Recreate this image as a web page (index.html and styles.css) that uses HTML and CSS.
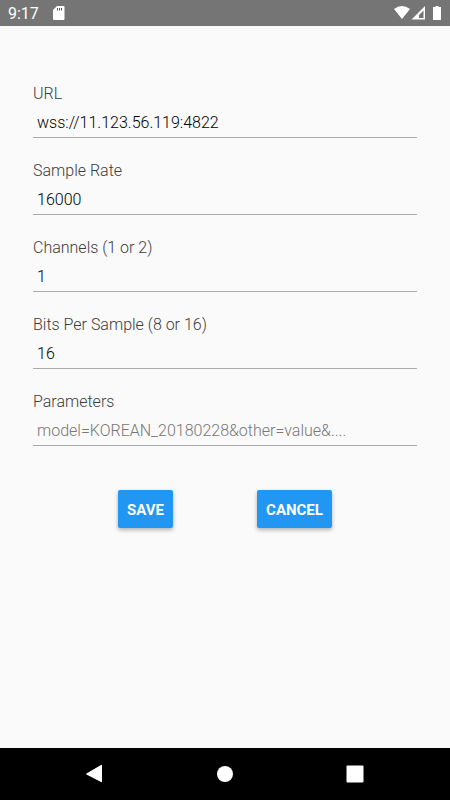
FILE: index.html
```html
<!DOCTYPE html>
<html lang="en">
<head>
<meta charset="utf-8">
<meta name="viewport" content="width=device-width, initial-scale=1">
<title>Settings</title>
<link rel="stylesheet" href="styles.css">
</head>
<body>
<header class="status">
  <span class="time">9:17</span>
  <svg class="sd" width="12" height="14" viewBox="0 0 12 14" aria-hidden="true"><path d="M4 0h6.500a1 1 0 0 1 1 1v12a1 1 0 0 1-1 1H1a1 1 0 0 1-1-1V4z" fill="#fff"/><path d="M4 2h1v2.500H4zM6 2h1v2.500H6zM8 2h1v2.500H8z" fill="#555"/></svg>
  <svg class="signals" width="48" height="14" viewBox="0 0 48 14" aria-hidden="true"><path d="M0 3Q8-3 16 3L8 13z" fill="#fff"/><path fill-rule="evenodd" d="M31 0v13.500H17.500zM29.500 4.500 25 9v3h4.500z" fill="#fff"/><path d="M39 1h2.500V0h3v1H47v13h-8z" fill="#fff"/></svg>
</header>
<main>
  <form class="form">
    <div class="field"><label for="url">URL</label><input id="url" type="text" value="wss://11.123.56.119:4822"></div>
    <div class="field"><label for="rate">Sample Rate</label><input id="rate" type="text" value="16000"></div>
    <div class="field"><label for="channels">Channels (1 or 2)</label><input id="channels" type="text" value="1"></div>
    <div class="field"><label for="bits">Bits Per Sample (8 or 16)</label><input id="bits" type="text" value="16"></div>
    <div class="field"><label for="params">Parameters</label><input id="params" type="text" placeholder="model=KOREAN_20180228&amp;other=value&amp;...."></div>
    <div class="actions"><button type="button">SAVE</button><button type="button">CANCEL</button></div>
  </form>
</main>
<nav class="nav">
  <button type="button" aria-label="Back"><svg width="20" height="20" viewBox="0 0 20 20"><path d="M1.500 9.500 16 1q1-.5 1 .5v16q0 1-1 .5L1.500 10.500q-1-.5 0-1z" fill="#fff"/></svg></button>
  <button type="button" aria-label="Home"><svg width="18" height="18" viewBox="0 0 18 18"><circle cx="9" cy="9" r="8" fill="#fff"/></svg></button>
  <button type="button" aria-label="Overview"><svg width="18" height="18" viewBox="0 0 18 18"><rect x=".5" y=".5" width="17" height="17" rx="1" fill="#fff"/></svg></button>
</nav>
</body>
</html>
```
FILE: styles.css
```css
* { box-sizing: border-box; }
body {
  margin: 0;
  min-height: 100vh;
  display: flex;
  flex-direction: column;
  background: #fafafa;
  font-family: Roboto, sans-serif;
  font-size: 16px;
}
.status {
  height: 26px;
  padding: 0 8px;
  display: flex;
  align-items: center;
  background: #757575;
  color: #fff;
}
.time { line-height: 20px; padding-top: 1px; }
.sd { margin-left: 14px; }
.signals { margin-left: auto; }
main { flex: 1; padding: 58px 33px 0; }
.field { margin-bottom: 23px; }
.field label { display: block; line-height: 20px; font-weight: 300; color: #3c3c3c; }
.field input {
  display: block;
  width: 100%;
  height: 34px;
  padding: 4px 4px 0;
  border: 0;
  border-bottom: 1px solid #aaa;
  background: none;
  font: inherit;
  font-weight: 300;
  color: #000;
  outline: 0;
}
.field input::placeholder { color: #777; opacity: 1; }
.actions { display: flex; justify-content: center; gap: 84px; padding-top: 21px; }
.actions button {
  height: 38px;
  padding: 1px 9px 0;
  border: 0;
  border-radius: 2px;
  background: #2196f3;
  color: #fff;
  font: bold 15px Roboto, sans-serif;
  box-shadow: 0 2px 4px rgba(0, 0, 0, .3);
}
.nav {
  height: 52px;
  display: flex;
  justify-content: center;
  background: #000;
}
.nav button {
  width: 130px;
  padding: 0;
  border: 0;
  background: none;
  display: flex;
  align-items: center;
  justify-content: center;
}
```
